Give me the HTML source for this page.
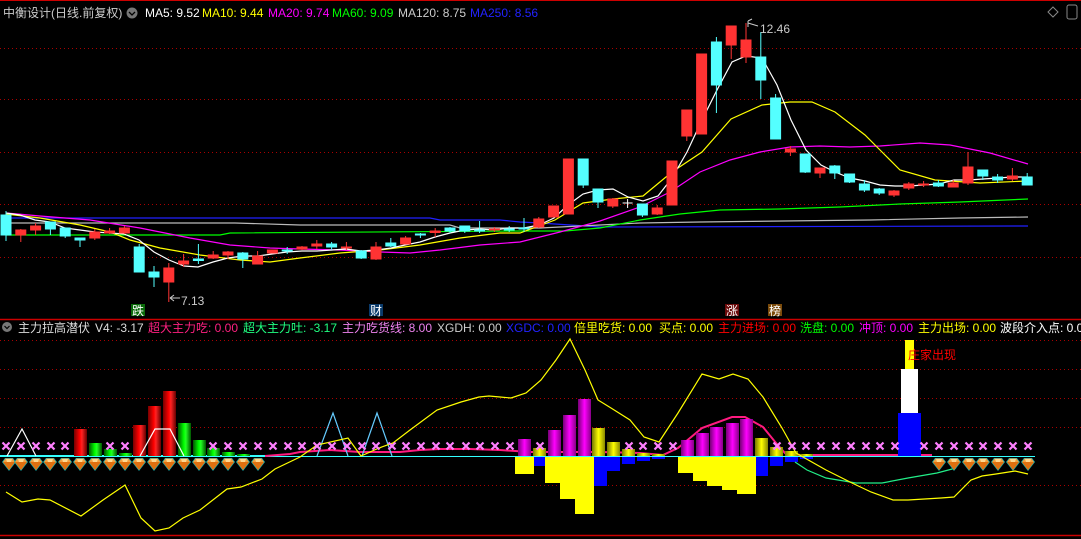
<!DOCTYPE html>
<html><head><meta charset="utf-8"><style>
html,body{margin:0;padding:0;background:#000;width:1081px;height:539px;overflow:hidden}
svg{display:block}
text{font-family:"Liberation Sans","Noto Sans CJK SC",sans-serif;font-size:12px}
</style></head><body>
<svg width="1081" height="539" viewBox="0 0 1081 539" xmlns="http://www.w3.org/2000/svg">
<defs>
<linearGradient id="gr" x1="0" x2="1"><stop offset="0" stop-color="#700"/><stop offset=".45" stop-color="#f00"/><stop offset=".6" stop-color="#f22"/><stop offset="1" stop-color="#600"/></linearGradient>
<linearGradient id="gg" x1="0" x2="1"><stop offset="0" stop-color="#050"/><stop offset=".45" stop-color="#0f0"/><stop offset=".6" stop-color="#2f2"/><stop offset="1" stop-color="#050"/></linearGradient>
<linearGradient id="gp" x1="0" x2="1"><stop offset="0" stop-color="#707"/><stop offset=".5" stop-color="#f0f"/><stop offset="1" stop-color="#808"/></linearGradient>
<linearGradient id="gy" x1="0" x2="1"><stop offset="0" stop-color="#770"/><stop offset=".5" stop-color="#ff0"/><stop offset="1" stop-color="#880"/></linearGradient>
<g id="x"><path d="M-3.5,-3.5L3.5,3.5M3.5,-3.5L-3.5,3.5" stroke="#ff80ff" stroke-width="2.2"/></g>
<g id="d"><path d="M-7,-2L-4,-6H4L7,-2L0,7Z" fill="#1aa" /><path d="M-6,-2L-3.5,-5.5H3.5L6,-2L0,6Z" fill="#f4a040"/><path d="M-6,-2H6L0,6Z" fill="#e07010"/><path d="M-3,-5H3L2,-2H-2Z" fill="#ffd890"/></g>
</defs>
<rect width="1081" height="539" fill="#000"/>
<line x1="0" y1="0.5" x2="1081" y2="0.5" stroke="#c00"/>
<g stroke="#a00" stroke-dasharray="1,3">
<line x1="0" y1="48.5" x2="1081" y2="48.5"/><line x1="0" y1="99.5" x2="1081" y2="99.5"/><line x1="0" y1="152.5" x2="1081" y2="152.5"/><line x1="0" y1="204.5" x2="1081" y2="204.5"/><line x1="0" y1="257.5" x2="1081" y2="257.5"/>
<line x1="0" y1="340.5" x2="1081" y2="340.5"/><line x1="0" y1="369.5" x2="1081" y2="369.5"/><line x1="0" y1="398.5" x2="1081" y2="398.5"/><line x1="0" y1="427.5" x2="1081" y2="427.5"/><line x1="0" y1="485.5" x2="1081" y2="485.5"/>
</g>
<line x1="0" y1="319.5" x2="1081" y2="319.5" stroke="#c00" stroke-width="1.5"/>
<line x1="0" y1="535.5" x2="1081" y2="535.5" stroke="#c00" stroke-width="1.5"/>

<!-- MA lines -->
<g fill="none" stroke-width="1.2">
<polyline stroke="#2020ff" points="6,218 430,218 440,220 500,220 520,222 540,223 600,227 1028,226"/>
<polyline stroke="#bbb" points="6,223 235,223 300,225 450,225 460,228 540,228 600,225 640,223 700,222 870,220 960,218 1028,217"/>
<polyline stroke="#0f0" points="6,235 220,235 230,233 520,231 565,231 600,228 640,220 680,214 720,210 780,209 840,207 900,204 960,202 1028,199"/>
<polyline stroke="#f0f" points="6,213 40,216 90,220 140,228 190,238 230,245 270,248 300,249 340,250 380,252 410,253 440,250 480,245 520,242 560,232 600,221 640,207 670,192 700,172 730,160 760,152 790,147 820,146 850,147 880,146 920,143 950,145 990,153 1028,164"/>
<polyline stroke="#ff0" points="6,214 40,218 80,225 110,232 130,240 160,248 200,255 240,260 270,262 300,258 340,253 380,250 420,245 460,238 500,233 520,233 555,220 583,203 613,199 643,196 672,172 702,152 731,119 762,105 790,102 812,102 835,112 865,135 880,150 900,170 935,180 980,183 1028,181"/>
<polyline stroke="#fff" points="6,213 20,215 35,220 50,222 65,228 80,230 95,232 110,233 124,234 139,240 154,252 169,260 184,266 198,267 213,262 228,258 243,256 258,256 272,254 287,252 302,251 317,251 332,250 346,249 361,251 376,250 391,248 405,245 420,242 435,237 450,233 465,230 480,229 494,230 509,228 524,228 539,225 554,218 568,205 583,194 598,190 613,189 628,197 643,201 658,196 672,178 687,152 702,120 717,90 732,62 746,56 762,58 777,85 791,120 806,150 821,165 835,172 850,178 865,181 880,185 895,186 909,186 924,185 939,184 954,180 969,180 983,179 998,178 1013,177 1028,177"/>
</g>

<!-- candles -->
<g stroke-width="1">
<g stroke="#54ffff" fill="#54ffff">
<line x1="6" y1="211" x2="6" y2="241"/><rect x="1" y="215" width="10" height="20"/>
<line x1="50.4" y1="222" x2="50.4" y2="235"/><rect x="45.4" y="222" width="10" height="7"/>
<line x1="65.2" y1="228" x2="65.2" y2="238"/><rect x="60.2" y="228" width="10" height="8"/>
<line x1="80" y1="238" x2="80" y2="247"/><rect x="75" y="238" width="10" height="2"/>
<line x1="139.2" y1="244" x2="139.2" y2="272"/><rect x="134.2" y="247" width="10" height="25"/>
<line x1="154" y1="266" x2="154" y2="287"/><rect x="149" y="272" width="10" height="5"/>
<line x1="198.4" y1="244" x2="198.4" y2="264"/><rect x="193.4" y="259" width="10" height="1.5"/>
<line x1="242.8" y1="252" x2="242.8" y2="268"/><rect x="237.8" y="253" width="10" height="6"/>
<line x1="287.2" y1="247" x2="287.2" y2="254"/><rect x="282.2" y="250" width="10" height="1"/>
<line x1="331.6" y1="242" x2="331.6" y2="250"/><rect x="326.6" y="244" width="10" height="3"/>
<line x1="361.2" y1="250" x2="361.2" y2="259"/><rect x="356.2" y="251" width="10" height="7"/>
<line x1="390.8" y1="238" x2="390.8" y2="247"/><rect x="385.8" y="243" width="10" height="3"/>
<line x1="420.4" y1="233" x2="420.4" y2="238"/><rect x="415.4" y="234" width="10" height="1"/>
<line x1="450" y1="227" x2="450" y2="233"/><rect x="445" y="228" width="10" height="3"/>
<line x1="464.8" y1="226" x2="464.8" y2="233"/><rect x="459.8" y="226" width="10" height="5"/>
<line x1="479.6" y1="221" x2="479.6" y2="233"/><rect x="474.6" y="230" width="10" height="1"/>
<line x1="509.2" y1="226" x2="509.2" y2="232"/><rect x="504.2" y="229" width="10" height="1"/>
<line x1="524" y1="218" x2="524" y2="232"/><rect x="519" y="228" width="10" height="1"/>
<line x1="583.2" y1="159" x2="583.2" y2="188"/><rect x="578.2" y="159" width="10" height="26"/>
<line x1="598" y1="189" x2="598" y2="208"/><rect x="593" y="189" width="10" height="13"/>
<line x1="642.4" y1="204" x2="642.4" y2="217"/><rect x="637.4" y="204" width="10" height="11"/>
<line x1="716.4" y1="37" x2="716.4" y2="113"/><rect x="711.4" y="42" width="10" height="43"/>
<line x1="760.8" y1="32" x2="760.8" y2="99"/><rect x="755.8" y="57" width="10" height="23"/>
<line x1="775.6" y1="94" x2="775.6" y2="139"/><rect x="770.6" y="98" width="10" height="41"/>
<line x1="805.2" y1="154" x2="805.2" y2="173"/><rect x="800.2" y="154" width="10" height="18"/>
<line x1="834.8" y1="165" x2="834.8" y2="179"/><rect x="829.8" y="166" width="10" height="7"/>
<line x1="849.6" y1="174" x2="849.6" y2="183"/><rect x="844.6" y="174" width="10" height="8"/>
<line x1="864.4" y1="180" x2="864.4" y2="192"/><rect x="859.4" y="184" width="10" height="6"/>
<line x1="879.2" y1="188" x2="879.2" y2="195"/><rect x="874.2" y="189" width="10" height="4"/>
<line x1="938.4" y1="180" x2="938.4" y2="187"/><rect x="933.4" y="183" width="10" height="3"/>
<line x1="982.8" y1="170" x2="982.8" y2="180"/><rect x="977.8" y="170" width="10" height="6"/>
<line x1="997.6" y1="174" x2="997.6" y2="183"/><rect x="992.6" y="177" width="10" height="3"/>
<line x1="1027.2" y1="173" x2="1027.2" y2="185"/><rect x="1022.2" y="177" width="10" height="8"/>
</g>
<g stroke="#ff3333" fill="#ff3333">
<line x1="20.8" y1="229" x2="20.8" y2="242"/><rect x="15.8" y="230" width="10" height="5"/>
<line x1="35.6" y1="223" x2="35.6" y2="235"/><rect x="30.6" y="226" width="10" height="4"/>
<line x1="94.8" y1="229" x2="94.8" y2="240"/><rect x="89.8" y="232" width="10" height="6"/>
<line x1="109.6" y1="228" x2="109.6" y2="234"/><rect x="104.6" y="231" width="10" height="2"/>
<line x1="124.4" y1="226" x2="124.4" y2="234"/><rect x="119.4" y="228" width="10" height="5"/>
<line x1="168.8" y1="263" x2="168.8" y2="302"/><rect x="163.8" y="268" width="10" height="14"/>
<line x1="183.6" y1="254" x2="183.6" y2="267"/><rect x="178.6" y="261" width="10" height="3"/>
<line x1="213.2" y1="251" x2="213.2" y2="259"/><rect x="208.2" y="255" width="10" height="3"/>
<line x1="228" y1="251" x2="228" y2="259"/><rect x="223" y="252" width="10" height="3"/>
<line x1="257.6" y1="251" x2="257.6" y2="264"/><rect x="252.6" y="256" width="10" height="8"/>
<rect x="267.4" y="250" width="10" height="3"/>
<line x1="302" y1="246" x2="302" y2="250"/><rect x="297" y="247" width="10" height="2"/>
<line x1="316.8" y1="240" x2="316.8" y2="249"/><rect x="311.8" y="244" width="10" height="2"/>
<line x1="346.4" y1="242" x2="346.4" y2="250"/><rect x="341.4" y="247" width="10" height="1"/>
<line x1="376" y1="242" x2="376" y2="260"/><rect x="371" y="247" width="10" height="12"/>
<line x1="405.6" y1="236" x2="405.6" y2="244"/><rect x="400.6" y="238" width="10" height="6"/>
<line x1="435.2" y1="228" x2="435.2" y2="237"/><rect x="430.2" y="231" width="10" height="1.5"/>
<line x1="494.4" y1="227" x2="494.4" y2="232"/><rect x="489.4" y="229" width="10" height="1"/>
<line x1="538.8" y1="217" x2="538.8" y2="228"/><rect x="533.8" y="219" width="10" height="8"/>
<rect x="548.6" y="206" width="10" height="11"/>
<rect x="563.4" y="159" width="10" height="55"/>
<line x1="612.8" y1="198" x2="612.8" y2="208"/><rect x="607.8" y="199" width="10" height="7"/>
<line x1="657.2" y1="205" x2="657.2" y2="215"/><rect x="652.2" y="208" width="10" height="6"/>
<rect x="667" y="161" width="10" height="44"/>
<line x1="686.8" y1="110" x2="686.8" y2="141"/><rect x="681.8" y="110" width="10" height="26"/>
<rect x="696.6" y="54" width="10" height="80"/>
<line x1="731.2" y1="26" x2="731.2" y2="59"/><rect x="726.2" y="26" width="10" height="19"/>
<line x1="746" y1="23" x2="746" y2="63"/><rect x="741" y="40" width="10" height="17"/>
<line x1="790.4" y1="146" x2="790.4" y2="156"/><rect x="785.4" y="149" width="10" height="3"/>
<line x1="820" y1="168" x2="820" y2="178"/><rect x="815" y="168" width="10" height="5"/>
<line x1="894" y1="190" x2="894" y2="197"/><rect x="889" y="191" width="10" height="4"/>
<line x1="908.8" y1="182" x2="908.8" y2="190"/><rect x="903.8" y="184" width="10" height="4"/>
<line x1="923.6" y1="181" x2="923.6" y2="187"/><rect x="918.6" y="184" width="10" height="1"/>
<line x1="953.2" y1="180" x2="953.2" y2="187"/><rect x="948.2" y="183" width="10" height="4"/>
<line x1="968" y1="152" x2="968" y2="185"/><rect x="963" y="167" width="10" height="16"/>
<line x1="1012.4" y1="168" x2="1012.4" y2="181"/><rect x="1007.4" y="176" width="10" height="3"/>
</g>
<g stroke="#fff"><line x1="627.6" y1="199" x2="627.6" y2="208"/><line x1="622.6" y1="203" x2="632.6" y2="203"/></g>
</g>
<!-- price labels -->
<g fill="#ccc" stroke="none">
<path d="M170,298 L174,295 M170,298 L180,298 M170,298 L174,301" stroke="#ccc" fill="none"/>
<text x="181" y="305" fill="#ccc">7.13</text>
<path d="M748,21 L752,19 M748,21 L748,27 M748,23 L758,26" stroke="#ccc" fill="none"/>
<text x="760" y="33" fill="#ccc">12.46</text>
</g>
<rect x="131" y="304" width="14" height="12" fill="#0a6a0a"/><text x="132" y="315" fill="#fff" font-size="12">跌</text>
<rect x="369" y="304" width="14" height="12" fill="#0a3a6a"/><text x="370" y="315" fill="#fff">财</text>
<rect x="725" y="304" width="14" height="12" fill="#6a0a0a"/><text x="726" y="315" fill="#fff">涨</text>
<rect x="768" y="304" width="14" height="12" fill="#7a4a0a"/><text x="769" y="315" fill="#fff">榜</text>

<!-- header -->
<text x="3" y="17" fill="#ccc" font-size="13">中衡设计(日线.前复权)</text>
<circle cx="132" cy="13" r="5.5" fill="#777"/><path d="M129,12 L132,15 L135,12" stroke="#000" stroke-width="1.3" fill="none"/>
<text x="145" y="17" fill="#fff">MA5: 9.52</text>
<text x="202" y="17" fill="#ff0">MA10: 9.44</text>
<text x="268" y="17" fill="#f0f">MA20: 9.74</text>
<text x="332" y="17" fill="#0f0">MA60: 9.09</text>
<text x="398" y="17" fill="#ccc">MA120: 8.75</text>
<text x="470" y="17" fill="#22f">MA250: 8.56</text>
<path d="M1053,7 L1058,12 L1053,17 L1048,12Z" stroke="#888" fill="none"/>
<rect x="1067" y="5" width="10" height="14" rx="2" stroke="#888" fill="none"/>

<text x="18" y="332" fill="#ddd">主力拉高潜伏</text>
<circle cx="7" cy="327" r="5" fill="#777"/><path d="M4.5,326 L7,328.5 L9.5,326" stroke="#000" stroke-width="1.2" fill="none"/>
<text x="95" y="332" fill="#ddd">V4: -3.17</text>
<text x="148" y="332" fill="#ff2080">超大主力吃: 0.00</text>
<text x="243" y="332" fill="#20ff80">超大主力吐: -3.17</text>
<text x="342" y="332" fill="#ee82ee">主力吃货线: 8.00</text>
<text x="437" y="332" fill="#ccc">XGDH: 0.00</text>
<text x="506" y="332" fill="#22f">XGDC: 0.00</text>
<text x="574" y="332" fill="#ff0">倍里吃货: 0.00</text>
<text x="659" y="332" fill="#ff0">买点: 0.00</text>
<text x="718" y="332" fill="#f00">主力进场: 0.00</text>
<text x="800" y="332" fill="#0f0">洗盘: 0.00</text>
<text x="859" y="332" fill="#f0f">冲顶: 0.00</text>
<text x="918" y="332" fill="#ff0">主力出场: 0.00</text>
<text x="1000" y="332" fill="#fff">波段介入点: 0.0</text>

<!-- lower panel -->
<line x1="0" y1="456" x2="265" y2="456" stroke="#3ff" stroke-width="2"/>
<line x1="265" y1="456.5" x2="1035" y2="456.5" stroke="#3ff" stroke-width="1"/>
<polyline fill="none" stroke="#ff1a80" stroke-width="2" points="265,456 290,454 300,452 330,450 345,451 360,452 400,452 420,450 440,449 470,449 500,450 530,452 560,452 600,452 640,453 663,455 678,448 702,428 732,417 745,417 763,427 776,443 785,453 800,455 932,455"/>
<g fill="url(#gr)"><rect x="74" y="429" width="13" height="27"/><rect x="133" y="425" width="13" height="31"/><rect x="148" y="406" width="13" height="50"/><rect x="163" y="391" width="13" height="65"/></g>
<g fill="url(#gg)"><rect x="89" y="443" width="13" height="13"/><rect x="104" y="449" width="13" height="7"/><rect x="119" y="453" width="13" height="3"/><rect x="178" y="423" width="13" height="33"/><rect x="193" y="440" width="13" height="16"/><rect x="207" y="448" width="13" height="8"/><rect x="222" y="452" width="13" height="4"/><rect x="237" y="454" width="13" height="2"/></g>
<g fill="url(#gp)"><rect x="518" y="439" width="13" height="17"/><rect x="548" y="430" width="13" height="26"/><rect x="563" y="415" width="13" height="41"/><rect x="578" y="399" width="13" height="57"/><rect x="681" y="440" width="13" height="16"/><rect x="696" y="433" width="13" height="23"/><rect x="710" y="427" width="13" height="29"/><rect x="726" y="423" width="13" height="33"/><rect x="740" y="419" width="13" height="37"/></g>
<g fill="url(#gy)"><rect x="533" y="448" width="13" height="8"/><rect x="592" y="428" width="13" height="28"/><rect x="607" y="442" width="13" height="14"/><rect x="622" y="449" width="13" height="7"/><rect x="637" y="453" width="13" height="3"/><rect x="652" y="454" width="13" height="2"/><rect x="755" y="438" width="13" height="18"/><rect x="770" y="447" width="13" height="9"/><rect x="785" y="451" width="13" height="5"/><rect x="800" y="454" width="13" height="2"/></g>
<g fill="#ff0"><rect x="515" y="457" width="19" height="17"/><rect x="545" y="457" width="15" height="26"/><rect x="560" y="457" width="15" height="42"/><rect x="575" y="457" width="19" height="57"/><rect x="678" y="457" width="15" height="16"/><rect x="693" y="457" width="14" height="24"/><rect x="707" y="457" width="15" height="29"/><rect x="722" y="457" width="15" height="33"/><rect x="737" y="457" width="19" height="37"/></g>
<g fill="#00f"><rect x="534" y="457" width="11" height="9"/><rect x="594" y="457" width="13" height="29"/><rect x="607" y="457" width="13" height="14"/><rect x="622" y="457" width="13" height="7"/><rect x="637" y="457" width="13" height="4"/><rect x="652" y="457" width="13" height="2"/><rect x="756" y="457" width="12" height="19"/><rect x="770" y="457" width="13" height="9"/><rect x="785" y="457" width="13" height="5"/><rect x="800" y="457" width="13" height="2"/></g>
<rect x="905" y="340" width="9" height="29" fill="#ff0"/>
<rect x="901" y="369" width="17" height="44" fill="#fff"/>
<rect x="898" y="413" width="23" height="43" fill="#00f"/>
<text x="908" y="359" fill="#f00" font-size="13">庄家出现</text>
<g fill="none" stroke-width="1.2">
<polyline stroke="#fff" points="7,456 22,429 36,456"/>
<polyline stroke="#fff" points="140,456 155,429 170,429 184,456"/>
<polyline stroke="#6cf" points="317,456 333,413 348,456"/>
<polyline stroke="#6cf" points="362,456 377,413 392,456"/>
<polyline stroke="#2e8" points="795,462 807,470 826,478 856,483 882,483 908,478 937,473 956,468"/>
<polyline stroke="#ff0" points="6,492 22,502 38,499 50,500 81,516 103,500 125,485 141,518 155,531 169,528 183,518 200,510 227,489 241,487 262,479 275,469 300,457 317,445 348,438 361,456 379,448 393,443 410,430 437,410 461,402 479,397 489,396 500,397 511,398 526,393 541,380 556,360 570,339 585,370 598,400 611,408 630,420 644,437 659,442 678,413 702,374 719,379 733,374 748,379 763,397 782,428 796,453 826,470 852,483 871,492 893,500 908,500 941,498 954,497 971,480 982,476 996,474 1015,471 1028,474"/>
</g>
<g>
<use href="#x" x="6" y="446"/><use href="#x" x="21" y="446"/><use href="#x" x="36" y="446"/><use href="#x" x="51" y="446"/><use href="#x" x="65" y="446"/><use href="#x" x="110" y="446"/><use href="#x" x="125" y="446"/>
<use href="#x" x="213" y="446"/><use href="#x" x="228" y="446"/><use href="#x" x="243" y="446"/><use href="#x" x="258" y="446"/><use href="#x" x="273" y="446"/><use href="#x" x="288" y="446"/><use href="#x" x="302" y="446"/><use href="#x" x="317" y="446"/><use href="#x" x="332" y="446"/><use href="#x" x="347" y="446"/><use href="#x" x="362" y="446"/><use href="#x" x="376" y="446"/><use href="#x" x="392" y="446"/><use href="#x" x="406" y="446"/><use href="#x" x="421" y="446"/><use href="#x" x="436" y="446"/><use href="#x" x="450" y="446"/><use href="#x" x="466" y="446"/><use href="#x" x="480" y="446"/><use href="#x" x="495" y="446"/><use href="#x" x="510" y="446"/><use href="#x" x="540" y="446"/>
<use href="#x" x="629" y="446"/><use href="#x" x="643" y="446"/><use href="#x" x="658" y="446"/><use href="#x" x="673" y="446"/>
<use href="#x" x="777" y="446"/><use href="#x" x="792" y="446"/><use href="#x" x="806" y="446"/><use href="#x" x="821" y="446"/><use href="#x" x="836" y="446"/><use href="#x" x="851" y="446"/><use href="#x" x="866" y="446"/><use href="#x" x="880" y="446"/><use href="#x" x="895" y="446"/><use href="#x" x="924" y="446"/><use href="#x" x="939" y="446"/><use href="#x" x="954" y="446"/><use href="#x" x="969" y="446"/><use href="#x" x="983" y="446"/><use href="#x" x="998" y="446"/><use href="#x" x="1013" y="446"/><use href="#x" x="1028" y="446"/>
</g>
<g>
<use href="#d" x="9" y="464"/><use href="#d" x="21" y="464"/><use href="#d" x="36" y="464"/><use href="#d" x="50" y="464"/><use href="#d" x="65" y="464"/><use href="#d" x="80" y="464"/><use href="#d" x="95" y="464"/><use href="#d" x="110" y="464"/><use href="#d" x="125" y="464"/><use href="#d" x="139" y="464"/><use href="#d" x="154" y="464"/><use href="#d" x="169" y="464"/><use href="#d" x="184" y="464"/><use href="#d" x="199" y="464"/><use href="#d" x="213" y="464"/><use href="#d" x="228" y="464"/><use href="#d" x="243" y="464"/><use href="#d" x="258" y="464"/>
<use href="#d" x="939" y="464"/><use href="#d" x="954" y="464"/><use href="#d" x="969" y="464"/><use href="#d" x="983" y="464"/><use href="#d" x="998" y="464"/><use href="#d" x="1013" y="464"/><use href="#d" x="1028" y="464"/>
</g>
</svg>
</body></html>
